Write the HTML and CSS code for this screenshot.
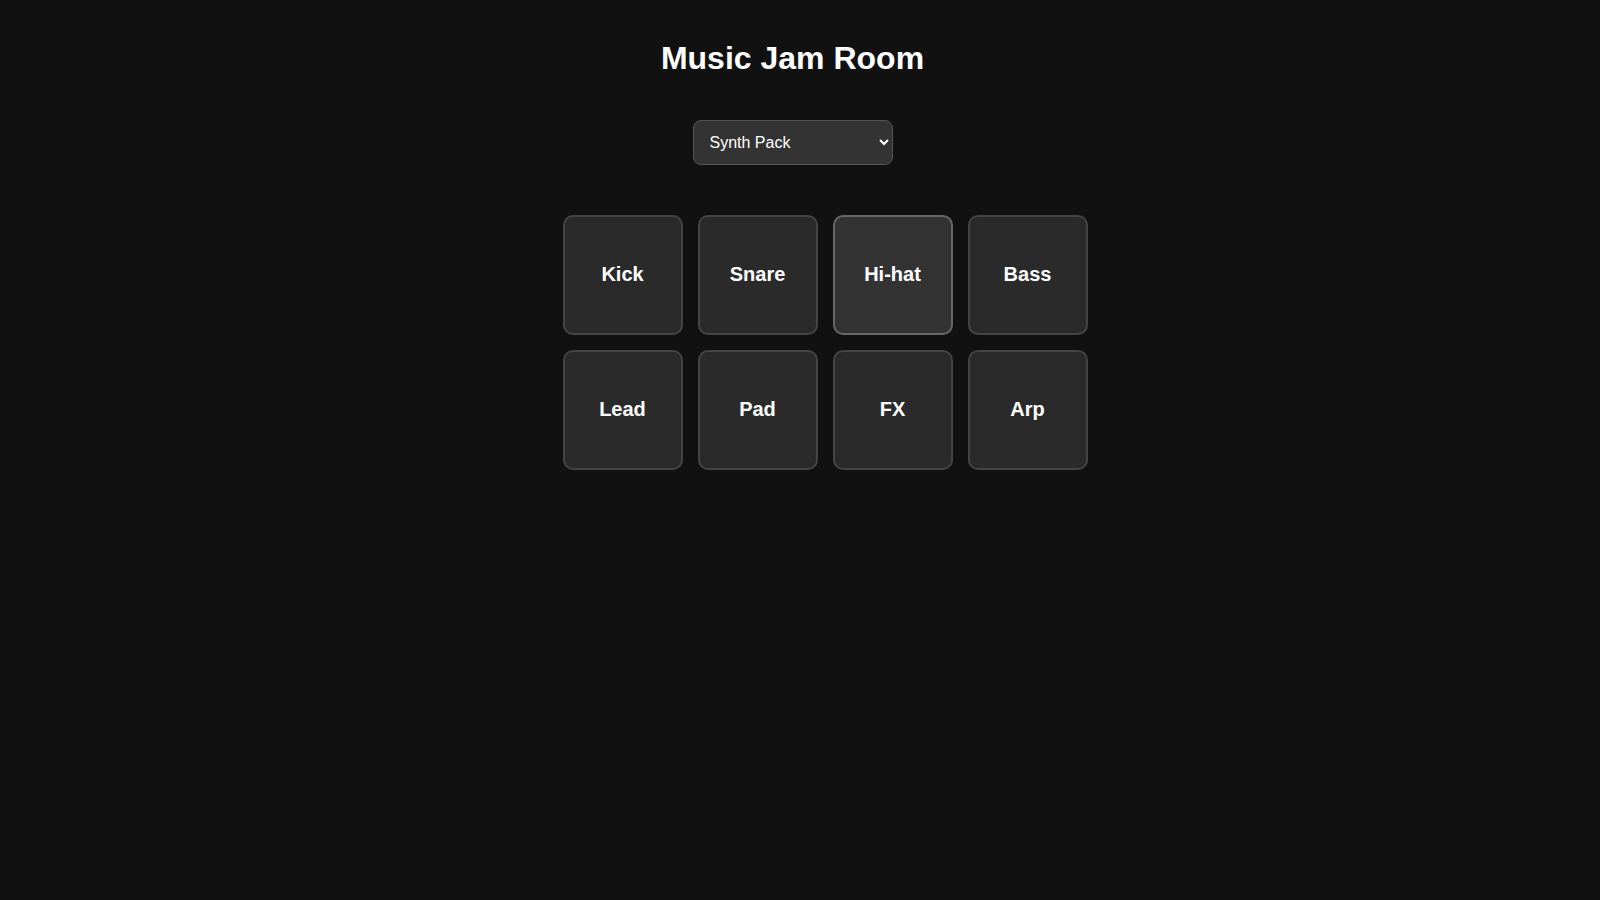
FILE: index.html
```html
<!DOCTYPE html>
<html>
  <head>
    <meta charset="UTF-8" />
    <title>Music Jam Room</title>
    <link rel="stylesheet" href="styles.css">
  </head>
  <body>
    <h1>Music Jam Room</h1>

    <select id="pack" class="pack-select">
      <option value="synth">Synth Pack</option>
      <option value="drums">Drum Pack</option>
      <option value="lofi">Lo-Fi Pack</option>
    </select>

    <div class="pads">
      <button type="button" class="pad">Kick</button>
      <button type="button" class="pad">Snare</button>
      <button type="button" class="pad active">Hi-hat</button>
      <button type="button" class="pad">Bass</button>
      <button type="button" class="pad">Lead</button>
      <button type="button" class="pad">Pad</button>
      <button type="button" class="pad">FX</button>
      <button type="button" class="pad">Arp</button>
    </div>
  </body>
</html>
```

FILE: styles.css
```css
/* General */
* {
  box-sizing: border-box;
}

body {
  margin: 0;
  padding: 20px 35px 35px 20px;
  min-height: 100vh;
  box-sizing: content-box;
  font-family: "Liberation Sans", Arial, sans-serif;
  color: #fff;
  background-color: #111;
  text-align: center;
}

h1 {
  margin: 20px 0 43px;
  font-size: 32px;
  font-weight: bold;
}

.pack-select {
  display: block;
  width: 200px;
  height: 45px;
  margin: 0 auto;
  padding: 0 8px 0 12px;
  font-family: "Liberation Sans", Arial, sans-serif;
  font-size: 16px;
  color: #fff;
  background-color: #333;
  border: 1px solid #555;
  border-radius: 8px;
}

/* Pads */
.pads {
  display: grid;
  grid-template-columns: repeat(4, 120px);
  gap: 15px;
  width: 460px;
  margin: 50px auto 0;
}

.pad {
  width: 120px;
  height: 120px;
  padding: 0 0 2px;
  font-family: "Liberation Sans", Arial, sans-serif;
  font-size: 20px;
  font-weight: bold;
  color: #fff;
  background-color: #2a2a2a;
  border: 2px solid #444;
  border-radius: 10px;
  cursor: pointer;
}

.pad.active {
  background-color: #333;
  border-color: #666;
}
```
